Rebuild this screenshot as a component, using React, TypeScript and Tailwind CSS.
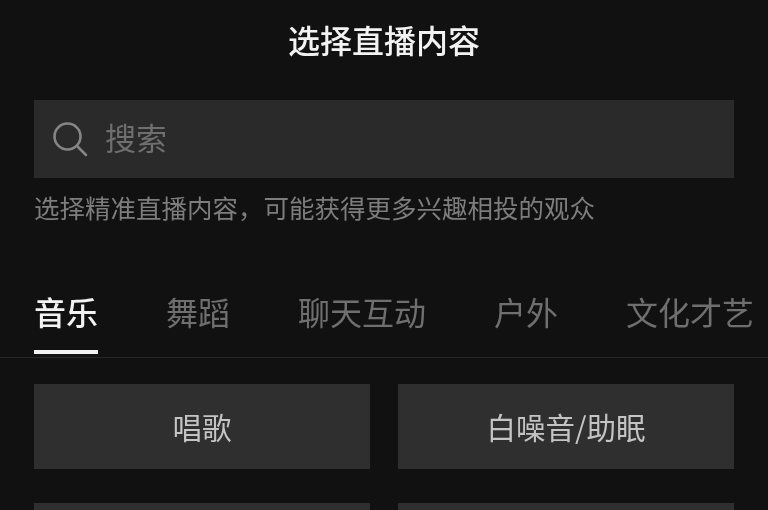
import React from 'react';

const tabs = ['音乐', '舞蹈', '聊天互动', '户外', '文化才艺'];
const options = ['唱歌', '白噪音/助眠', '', ''];

function SearchIcon() {
  return (
    <svg width="37" height="36" viewBox="0 0 37 36" fill="none" stroke="#858585" strokeWidth="2.6" strokeLinecap="round">
      <circle cx="16.5" cy="15.5" r="13" />
      <path d="M26 25 L35 34" />
    </svg>
  );
}

export default function App() {
  const font = { fontFamily: '"Noto Sans CJK SC", sans-serif' };
  return (
    <div style={font} className="w-[768px] h-[510px] overflow-hidden bg-[#111112] blur-[0.7px]">
      <h1 className="h-[78px] flex items-center justify-center text-[32px] font-medium text-[#f2f2f2]">
        选择直播内容
      </h1>
      <div className="mx-[34px] mt-[22px] h-[78px] bg-[#2a2a2b] flex items-center pl-[17px]">
        <SearchIcon />
        <span className="ml-[17px] mb-[4px] text-[31px] text-[#6f6f6f]">搜索</span>
      </div>
      <p className="mx-[34px] mt-[11px] h-[36px] leading-[36px] text-[25.5px] whitespace-nowrap text-[#7d7d7d]">
        选择精准直播内容，可能获得更多兴趣相投的观众
      </p>
      <div className="mt-[45px] h-[88px] border-b border-[#262626] flex pl-[34px] whitespace-nowrap">
        {tabs.map((tab, idx) => (
          <div
            key={tab}
            className={
              idx === 0
                ? 'mr-[68px] h-[84px] leading-[82px] text-[32px] font-medium text-[#f2f2f2] border-b-[4px] border-[#f2f2f2]'
                : 'mr-[68px] h-[84px] leading-[82px] text-[32px] text-[#6f6f6f]'
            }
          >
            {tab}
          </div>
        ))}
      </div>
      <div className="grid grid-cols-2 gap-x-[28px] gap-y-[34px] px-[34px] mt-[26px]">
        {options.map((opt, idx) => (
          <div
            key={idx}
            className="h-[85px] bg-[#2f2f30] flex items-center justify-center text-[29.5px] text-[#c4c4c4]"
          >
            {opt}
          </div>
        ))}
      </div>
    </div>
  );
}
